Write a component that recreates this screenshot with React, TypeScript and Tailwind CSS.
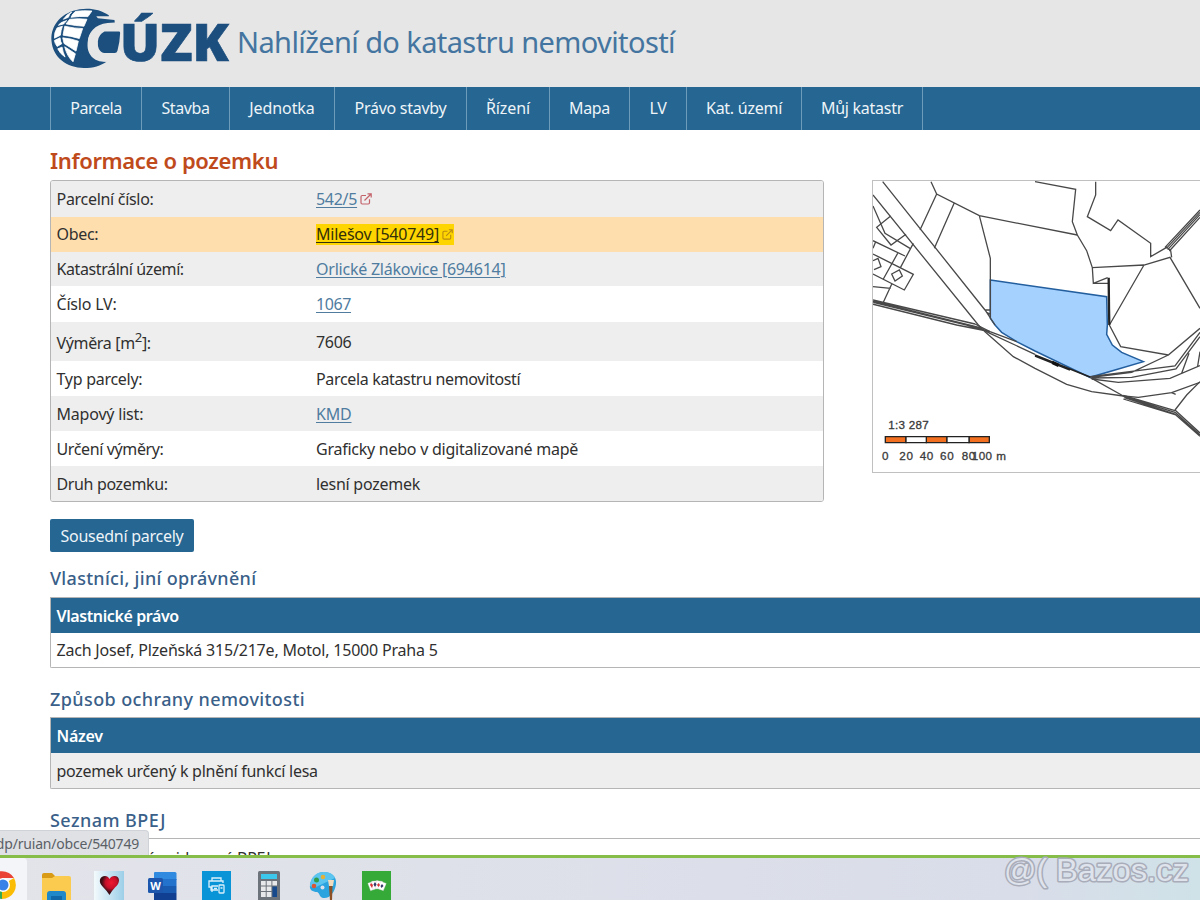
import type { ReactNode } from 'react';

const NAV = [
  { label: 'Parcela', cls: 'w-[91px] tracking-[-0.5px]' },
  { label: 'Stavba', cls: 'w-[88px] tracking-[-0.4px]' },
  { label: 'Jednotka', cls: 'w-[105px] tracking-[-0.1px]' },
  { label: 'Právo stavby', cls: 'w-[132px] tracking-[-0.26px]' },
  { label: 'Řízení', cls: 'w-[83px] tracking-[-0.1px]' },
  { label: 'Mapa', cls: 'w-[80px] tracking-[-0.3px]' },
  { label: 'LV', cls: 'w-[57px] tracking-[-0.3px]' },
  { label: 'Kat. území', cls: 'w-[115px] tracking-[-0.26px]' },
  { label: 'Můj katastr', cls: 'w-[121px] tracking-[-0.27px]' },
];

function ExternalIcon({ className }: { className: string }) {
  return (
    <svg viewBox="0 0 12 12" className={className} fill="none" stroke="currentColor" strokeWidth="1.2">
      <path d="M6 2.5H2.2Q1 2.5 1 3.7v6.1Q1 11 2.2 11h6.1q1.200 0 1.200-1.200V6.300M4.500 7.500 11 1M7.500.8h3.700v3.700" />
    </svg>
  );
}

function Row({ label, track, bg, children }: { label: ReactNode; track: string; bg: string; children: ReactNode }) {
  return (
    <div className={`flex items-center pl-[5.5px] ${bg}`}>
      <div className={`w-[259.5px] shrink-0 ${track}`}>{label}</div>
      <div className="flex items-center">{children}</div>
    </div>
  );
}

const LINK = 'text-[#4f7c9f] underline underline-offset-2 decoration-1';

function Logo() {
  return (
    <svg viewBox="0 0 540 190" className="h-[63px] w-[180px] shrink-0 overflow-visible">
      <path
        fill="#1c4f7e"
        d="M176 22C150 4 118-1 88 4 35 13 0 50 3 99c4 50 46 82 98 82 28 0 51-7 69-20-12 2-24 0-34-5-18-10-26-28-24-51 2-32 22-56 60-60l22-1-1-8-50-5-5-6 38 0Z"
      />
      <g fill="#fff" stroke="#fff" strokeWidth="2.5" strokeLinejoin="round">
        <path d="M76 10Q98 7 125 9L113 26Q88 24 62 28Q66 17 76 10ZM58 34Q86 31 110 34L101 55Q78 54 47 48ZM43 55Q74 62 97 62L87 92Q60 84 38 82ZM37 90Q62 92 84 100L77 130Q57 117 41 107ZM43 117Q60 128 75 138L68 162Q50 146 43 117Z" />
        <path d="M64 12Q56 19 54 28L39 34Q49 19 64 12ZM49 38Q43 43 40 48L24 52Q29 43 49 38ZM36 55Q31 67 30 82L12 91Q11 73 20 60ZM29 90Q30 103 34 108L20 116Q13 107 12 98ZM35 118Q37 133 44 148Q28 137 22 123Z" />
      </g>
      <path fill="#e6e6e6" d="M158 56h36v8q-34-1-44 22-9 21-3 39 6 20 25 27h20v10h-25c-32-3-54-28-54-58 0-25 14-43 45-48Z" />
      <path fill="#1c4f7e" d="M163 71h44q4 0 3 6-1 27-8 52-2 7-8 7h-31q-10 0-17-12-4-8-3-24 2-20 20-29Z" />
      <text x="210" y="161" textLength="328" lengthAdjust="spacingAndGlyphs" fill="#1c4f7e" stroke="#1c4f7e" strokeWidth="2" className="font-['Open_Sans',sans-serif] text-[157px] font-extrabold">
        ÚZK
      </text>
    </svg>
  );
}

function ParcelMap() {
  return (
    <svg viewBox="9 18 981 873" className="h-[291px] w-[327px]">
      <path fill="#a5d1ff" stroke="#235f9f" strokeWidth="4.5" d="M361 315 710 365 712 450 710 478 727 510 755 532 820 560 660 607 495 528 440 500 395 472 375 450 361 430Z" />
      <g fill="none" stroke="#484848" strokeWidth="3.9">
        <path d="M9 60 325 450 345 470 430 545 495 580 590 628 665 650 760 663 805 667 905 653 990 622" />
        <path d="M38 20 345 405 375 450M183 20 200 57 328 122 622 180M200 57 150 165M253 83 193 220M328 122 361 250V430M345 405h15M350 412l11 6" />
        <path d="M9 93 45 175 120 220M62 123 20 157 63 210 108 178M9 197 105 243M130 205 90 280M9 237 130 298 103 345 9 297M83 235 40 312M17 200 9 220M9 335l53 5M65 328 40 382" />
        <path d="M65 297 88 285 97 303 75 318ZM9 257 24 250 33 275 12 284" />
        <path d="M9 375 315 447M9 382 290 450 360 470M9 388 260 450 340 466M9 379 330 458" strokeWidth="4.500" />
        <path d="M325 450 330 460 360 475 495 538M315 447 360 470 440 500" />
        <path d="M495 20 617 43 607 140 622 180 650 227 667 278 822 270 900 247 990 400M667 278 670 325 713 308M670 325h45M822 270 720 447" />
        <path d="M716 308 717 400 718 450" strokeWidth="7" stroke="#222" />
        <path d="M677 20v40l-25 65 70 42 22-32 98 70v40l48-28 12 10 3 20M885 217 990 105M889 220 990 112M893 224 990 119M898 228 990 127" />
        <path d="M718 450 752 515 895 540 990 460M895 540 785 592 665 607M990 472 915 573 660 605M990 485 918 582 785 607 665 609M957 535 935 595M990 530 983 573M665 612 745 622 900 610 990 572" />
        <path d="M660 607 760 663M760 661 915 707M760 664 915 712M763 668 915 717M760 672 915 719M915 705 990 774M915 712 990 780M915 718 990 784M915 705 950 660 990 620M905 653l12 5" />
        <path d="M495 540 660 606M495 543 600 585" strokeWidth="5" stroke="#222" />
      </g>
      <path d="M548 557 568 566 564 576 545 567Z" fill="#111" />
      <g stroke="#222" strokeWidth="4">
        <path fill="#f37021" d="M46 785h62v18H46ZM169 785h62v18h-62ZM297 785h61v18h-61Z" />
        <path fill="#fff" d="M108 785h61v18h-61ZM231 785h66v18h-66Z" />
      </g>
      <g fill="#3a3a3a" stroke="#3a3a3a" strokeWidth=".9" className="font-['Liberation_Sans',sans-serif] text-[35px]">
        <text x="55" y="761" textLength="121">1:3 287</text>
        <text x="36" y="854">0</text>
        <text x="88" y="854" textLength="41">20</text>
        <text x="149" y="854" textLength="41">40</text>
        <text x="210" y="854" textLength="41">60</text>
        <text x="275" y="854" textLength="41">80</text>
        <text x="305" y="854" textLength="103">100 m</text>
      </g>
    </svg>
  );
}

function Taskbar() {
  return (
    <div className="relative h-[45px] shrink-0 overflow-hidden border-t-[3px] border-[#85bd48] bg-linear-to-r from-[#e3e4ea] via-[#d9dde9] via-85% to-[#cfe2e8]">
      <div className="flex h-full items-start">
        <div className="h-full w-[27px] shrink-0 rounded-tr bg-[#f4f5f9] pt-[13px]">
          <svg viewBox="0 0 28 28" className="-ml-3 size-7">
            <path fill="#fbbc05" d="M14 14 26 7a14 14 0 0 1-12 21Z" />
            <path fill="#34a853" d="M14 14v14A14 14 0 0 1 2 7Z" />
            <path fill="#ea4335" d="M2 7a14 14 0 0 1 24 0H14v7Z" />
            <circle cx="15" cy="14" r="7" fill="#fff" />
            <circle cx="15" cy="14" r="5.500" fill="#3b82e8" />
          </svg>
        </div>
        <svg viewBox="0 0 30 28" className="mt-[14px] ml-[15px] h-7 w-[30px] shrink-0">
          <path fill="#d99a16" d="M0 3q0-2 2-2h8l4 4v8H0Z" />
          <path fill="#fbcb4f" d="M0 6h10l3-2h14q2 0 2 2v22H0Z" />
          <path fill="#1e88c8" d="M5 28v-6q0-3 3-3h13q3 0 3 3v6Z" />
          <path fill="#1168a8" d="M9 24h11v4H9Z" />
        </svg>
        <svg viewBox="0 0 30 30" className="mt-[13px] ml-[22px] size-[30px] shrink-0">
          <defs>
            <linearGradient id="heartBg" x2="1">
              <stop stopColor="#f3fafc" />
              <stop offset="1" stopColor="#9ccfe8" />
            </linearGradient>
            <radialGradient id="heart" cx=".6" cy=".35">
              <stop stopColor="#f01830" />
              <stop offset=".6" stopColor="#c8102a" />
              <stop offset="1" stopColor="#3c1016" />
            </radialGradient>
          </defs>
          <path fill="url(#heartBg)" d="M0 0h30v30H0Z" />
          <path fill="url(#heart)" d="M15.500 24Q13 20 9 16 5 12 6 8.500 7 5 11 5q3 0 4.500 3Q17 5 20.500 5q4 0 4.500 4 0 4-4 7.500-3 3-5.500 7.500Z" />
        </svg>
        <svg viewBox="0 0 29 28" className="mt-[14px] ml-[24px] h-7 w-[29px] shrink-0">
          <path fill="#2f8ae0" d="M7 0h20q1.500 0 1.500 1.500V8H6V1Q6 0 7 0Z" />
          <path fill="#2372cb" d="M6 7h22.500v7H6Z" />
          <path fill="#195bb0" d="M6 14h22.500v7H6Z" />
          <path fill="#103f91" d="M6 21h22.500v7H6Z" />
          <rect y="6" width="15" height="15" rx="1.500" fill="#1c57ad" />
          <text x="7.500" y="17.500" textAnchor="middle" fill="#fff" className="font-['Open_Sans',sans-serif] text-[11px] font-bold">W</text>
        </svg>
        <svg viewBox="0 0 29 30" className="mt-[13px] ml-[25px] h-[30px] w-[29px] shrink-0">
          <path fill="#0a94d8" d="M0 0h29v30H0Z" />
          <g fill="none" stroke="#d9effa" strokeWidth="1.300">
            <path d="M10 10V7h9v3M16 19H9v-3H7v-6h14v2M10 21v-6h6" />
            <rect x="17" y="14" width="5" height="8" rx=".7" />
            <path d="M18.500 17h2M12 17.500h3" />
          </g>
        </svg>
        <svg viewBox="0 0 22 30" className="mt-[13px] ml-[27px] h-[30px] w-[22px] shrink-0">
          <rect width="22" height="32" rx="1.500" fill="#6d737b" />
          <path fill="#3cc8ec" d="M3 3h16v5H3Z" />
          <path fill="#e6e8ea" d="M3 10h4.700v4.500H3ZM8.700 10h4.700v4.500H8.700ZM14.400 10H19v4.500h-4.600ZM3 15.500h4.700V20H3ZM8.700 15.500h4.700V20H8.700ZM3 21h4.700v5H3ZM8.700 21h4.700v5H8.700Z" />
          <path fill="#164a8c" d="M14.400 15.500H19V26h-4.600Z" />
        </svg>
        <svg viewBox="0 0 28 30" className="mt-[13px] ml-[29px] h-[30px] w-7 shrink-0">
          <path fill="#2ba3de" d="M15 1c8 0 13 5 12 12-1 8-6 15-13 14-4-1-3-5-6-6-4 0-8-2-7-7C2 7 7 1 15 1Z" />
          <path fill="#5cc5ef" d="M15 1c5 0 9 2 11 6L5 17l-4-2C1 7 7 1 15 1Z" />
          <circle cx="13.500" cy="16.500" r="2" fill="#dbe0eb" />
          <circle cx="7.500" cy="9" r="2.500" fill="#2f9c4a" />
          <circle cx="14" cy="6" r="2.300" fill="#e3b13a" />
          <circle cx="5" cy="15" r="2.300" fill="#da5535" />
          <path fill="#efdcc0" d="M19 9h6l-1 6h-4Z" />
          <path fill="#8c5126" d="M20 15h3.500l-.5 15h-2Z" />
        </svg>
        <svg viewBox="0 0 29 30" className="mt-[13px] ml-[25px] h-[30px] w-[29px] shrink-0">
          <path fill="#35aa38" d="M0 0h29v30H0Z" />
          <g fill="#fff" stroke="#b8c4c0" strokeWidth=".3">
            <rect x="7" y="11" width="6" height="8" transform="rotate(-20 10 15)" />
            <rect x="10" y="10" width="6" height="8" transform="rotate(-6 13 14)" />
            <rect x="14" y="10" width="6" height="8" transform="rotate(8 17 14)" />
            <rect x="17" y="11" width="6" height="8" transform="rotate(22 20 15)" />
          </g>
          <path fill="#d93236" d="m9 12 2 2-1 3-2-3ZM16.500 12l1.500 2-1.500 2-1.500-2Z" />
          <path fill="#30386a" d="m13 11 1.500 2.500L13 16l-1.500-2.500ZM20 13l1.500 2-2 2-1-2Z" />
        </svg>
      </div>
    </div>
  );
}

export default function App() {
  return (
    <div className="relative flex h-[900px] w-[1200px] flex-col overflow-hidden bg-white font-['Noto_Sans','Open_Sans',sans-serif] text-base text-[#303030]">
      <header className="flex h-[87px] shrink-0 items-start bg-[#e6e6e6] pt-2 pl-[50px]">
        <Logo />
        <div className="mt-[14px] ml-[7px] text-[29px] leading-[40px] tracking-[-0.6px] whitespace-nowrap text-[#4475a0]">Nahlížení do katastru nemovitostí</div>
      </header>
      <nav className="flex h-[42.5px] shrink-0 bg-[#256692] pl-[50px] text-[#eef4f8]">
        <div className="w-px bg-[#6d9bba]" />
        {NAV.map((n) => (
          <div key={n.label} className={`flex items-center justify-center border-r border-[#6d9bba] whitespace-nowrap ${n.cls}`}>
            {n.label}
          </div>
        ))}
      </nav>
      <main className="min-h-0 flex-1 overflow-hidden pl-[50px]">
        <h1 className="mt-[14px] h-[36.5px] text-[22px] leading-[32px] font-semibold tracking-[-0.37px] text-[#bf4a1c]">Informace o pozemku</h1>
        <div className="flex items-start">
          <div className="grid h-[322px] w-[774px] shrink-0 grid-rows-[36px_34.5px_34.5px_36px_39px_35px_35px_35px_35px] overflow-hidden rounded-[3px] border border-[#b5b5b5]">
            <Row label="Parcelní číslo:" track="tracking-[-0.3px]" bg="bg-[#eeeeee]">
              <span className={`${LINK} tracking-[-0.3px]`}>542/5</span>
              <ExternalIcon className="ml-[3px] size-3 text-[#c4626a]" />
            </Row>
            <Row label="Obec:" track="tracking-[-0.3px]" bg="bg-[#ffdead]">
              <span className="flex h-[21px] items-center bg-[#ffd500] pr-px">
                <span className="tracking-[-0.22px] text-[#33300a] underline decoration-1 underline-offset-2">Milešov [540749]</span>
                <ExternalIcon className="ml-[3px] size-[11px] text-[#b98a10]" />
              </span>
            </Row>
            <Row label="Katastrální území:" track="tracking-[-0.4px]" bg="bg-[#eeeeee]">
              <span className={`${LINK} tracking-[-0.23px]`}>Orlické Zlákovice [694614]</span>
            </Row>
            <Row label="Číslo LV:" track="tracking-[-0.2px]" bg="bg-white">
              <span className={`${LINK} tracking-[-0.4px]`}>1067</span>
            </Row>
            <Row label={<div className="pt-0.5">Výměra [m<sup className="text-[82%]">2</sup>]:</div>} track="tracking-[-0.35px]" bg="bg-[#eeeeee]">
              <span className="tracking-[-0.3px]">7606</span>
            </Row>
            <Row label="Typ parcely:" track="tracking-[-0.27px]" bg="bg-white">
              <span className="tracking-[-0.34px]">Parcela katastru nemovitostí</span>
            </Row>
            <Row label="Mapový list:" track="tracking-[-0.2px]" bg="bg-[#eeeeee]">
              <span className={`${LINK} tracking-[-0.2px]`}>KMD</span>
            </Row>
            <Row label="Určení výměry:" track="tracking-[-0.37px]" bg="bg-white">
              <span className="tracking-[-0.25px]">Graficky nebo v digitalizované mapě</span>
            </Row>
            <Row label="Druh pozemku:" track="tracking-[-0.36px]" bg="bg-[#eeeeee]">
              <span className="tracking-[-0.27px]">lesní pozemek</span>
            </Row>
          </div>
          <div className="ml-[48px] h-[293px] w-[328px] shrink-0 border border-r-0 border-[#c0c0c0]">
            <ParcelMap />
          </div>
        </div>
        <button className="mt-[17px] flex h-[33px] w-36 items-center justify-center rounded-[2px] bg-[#256692] tracking-[-0.27px] whitespace-nowrap text-[#eef4f8]">Sousední parcely</button>
        <h2 className="mt-[13px] h-8 text-[18px] leading-[26px] font-medium tracking-[0.3px] text-[#3a5f89]">Vlastníci, jiní oprávnění</h2>
        <section className="h-[71px] rounded-bl-[2px] border border-r-0 border-[#b5b5b5]">
          <div className="flex h-[35px] items-center bg-[#256692] pl-[5.5px] font-semibold tracking-[-0.4px] text-white">Vlastnické právo</div>
          <div className="flex h-[34px] items-center pl-[5.5px] tracking-[-0.2px]">Zach Josef, Plzeňská 315/217e, Motol, 15000 Praha 5</div>
        </section>
        <h2 className="mt-[18px] h-[31px] text-[18px] leading-[26px] font-medium tracking-[0.4px] text-[#3a5f89]">Způsob ochrany nemovitosti</h2>
        <section className="h-[72px] rounded-bl-[2px] border border-r-0 border-[#b5b5b5]">
          <div className="flex h-[35px] items-center bg-[#256692] pl-[5.5px] font-semibold tracking-[-0.3px] text-white">Název</div>
          <div className="flex h-[35px] items-center bg-[#eeeeee] pl-[5.5px] tracking-[-0.28px]">pozemek určený k plnění funkcí lesa</div>
        </section>
        <h2 className="mt-[18px] h-[31px] text-[18px] leading-[26px] font-medium tracking-[0.45px] text-[#3a5f89]">Seznam BPEJ</h2>
        <section className="h-[72px] border border-r-0 border-[#b5b5b5] pt-[7px] pl-1.5 tracking-[-0.27px]">Parcela nemá evidované BPEJ.</section>
      </main>
      <Taskbar />
      <div className="absolute top-[830px] left-0 flex h-[25px] w-[149px] items-center justify-end overflow-hidden rounded-tr border-t border-r border-[#cfd2d6] bg-[#dfe1e5] pr-[9px] text-[14px] tracking-[-0.2px] whitespace-nowrap text-[#5b5f66]">
        dp/ruian/obce/540749
      </div>
      <svg viewBox="0 0 200 45" className="absolute top-[853px] left-[1000px] h-[45px] w-[200px]" fill="#dfe3ec" stroke="#a9acb9" strokeWidth="3" strokeLinejoin="round" paintOrder="stroke">
        <text x="4" y="28" textLength="43" lengthAdjust="spacingAndGlyphs" className="font-['Liberation_Sans',sans-serif] text-[31px]">@(</text>
        <text x="56" y="28" textLength="133" lengthAdjust="spacingAndGlyphs" className="font-['Liberation_Sans',sans-serif] text-[31px]">Bazos.cz</text>
      </svg>
    </div>
  );
}
